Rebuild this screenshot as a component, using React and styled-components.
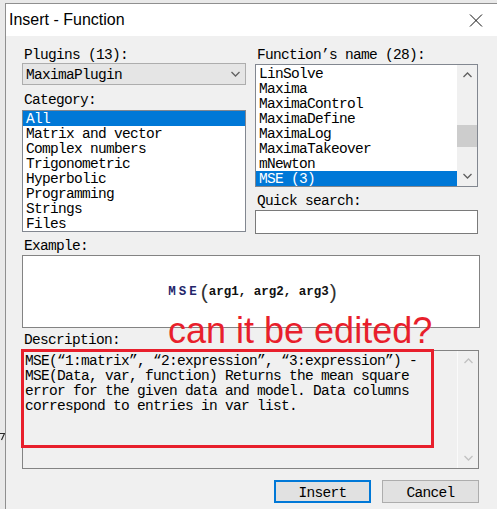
import styled, { createGlobalStyle } from "styled-components";

const mono = `"Liberation Mono", "Noto Sans CJK SC", monospace`;

const GlobalStyle = createGlobalStyle`
  html, body {
    margin: 0;
    padding: 0;
  }
  body {
    background: #e9e9e9;
    overflow: hidden;
  }
`;

const Screen = styled.div`
  width: 497px;
  height: 509px;
  box-sizing: border-box;
  padding: 3px 0 0 5px;
  position: relative;
  overflow: hidden;
`;

// fragment of whatever sits behind the dialog, peeking out on the left
const Stray = styled.svg`
  position: absolute;
  left: 0;
  top: 432px;
`;

const Window = styled.div`
  height: 100%;
  border-left: 1px solid #8f8f8f;
  border-top: 1px solid #8f8f8f;
  background: #f0f0f0;
  display: flex;
  flex-direction: column;
`;

const TitleBar = styled.div`
  height: 32px;
  flex: none;
  background: #fff;
  display: flex;
  align-items: center;
  justify-content: space-between;
  padding: 0 14px 0 3px;
  font-family: "Liberation Sans", Arial, sans-serif;
  font-size: 16px;
  color: #000;
`;

const Body = styled.div`
  flex: 1;
  display: flex;
  flex-direction: column;
  padding: 11px 17px 0 16px;
`;

const TopGrid = styled.div`
  display: grid;
  grid-template-columns: 224px 223px;
  column-gap: 9px;
  align-items: start;
`;

const Field = styled.div`
  display: flex;
  flex-direction: column;
`;

const Label = styled.div`
  font-family: ${mono};
  font-size: 14.5px;
  letter-spacing: -0.7px;
  line-height: 16px;
  color: #000;
  padding-left: 2px;
  margin-top: ${(p) => p.$top || 0}px;
  white-space: pre;
`;

const Combo = styled.div`
  height: 22px;
  box-sizing: border-box;
  border: 1px solid #adadad;
  background: #e5e5e5;
  display: flex;
  justify-content: space-between;
  padding: 3px 5px 0 3px;
  font-family: ${mono};
  font-size: 14.5px;
  letter-spacing: -0.7px;
  line-height: 17px;
  color: #000;

  svg {
    align-self: center;
    margin-top: -3px;
  }
`;

const ListBox = styled.div`
  margin-top: ${(p) => p.$top}px;
  height: ${(p) => p.$h}px;
  box-sizing: border-box;
  border: 1px solid #828790;
  background: #fff;
  display: flex;
  overflow: hidden;
`;

const Items = styled.div`
  flex: 1;
  min-width: 0;
  padding-top: ${(p) => p.$pad || 0}px;
`;

const Item = styled.div`
  height: 15px;
  line-height: 16px;
  padding-left: 3px;
  white-space: pre;
  font-family: ${mono};
  font-size: 14.5px;
  letter-spacing: -0.7px;
  background: ${(p) => (p.$selected ? "#0078d7" : "transparent")};
  color: ${(p) => (p.$selected ? "#fff" : "#000")};
`;

const ScrollBar = styled.div`
  width: 20px;
  flex: none;
  display: flex;
  flex-direction: column;
  background: #f0f0f0;
  border-left: ${(p) => (p.$disabled ? "1px solid #fafafa" : "none")};
`;

const ArrowBtn = styled.div`
  height: 20px;
  flex: none;
  display: flex;
  align-items: center;
  justify-content: center;
`;

const Track = styled.div`
  flex: 1;
`;

const Thumb = styled.div`
  height: 22px;
  background: #cdcdcd;
`;

const SearchInput = styled.input`
  margin-top: 1px;
  height: 24px;
  box-sizing: border-box;
  border: 1px solid #7a7a7a;
  background: #fff;
  outline: none;
  font-family: ${mono};
  font-size: 14.5px;
`;

const ExampleBox = styled.div`
  margin-top: 1px;
  height: 73px;
  box-sizing: border-box;
  border: 1px solid #838383;
  background: #fff;
  display: flex;
  align-items: center;
  justify-content: center;
  padding-left: 4px;
`;

const Formula = styled.div`
  display: flex;
  align-items: center;
  font-family: ${mono};
  font-weight: bold;
  font-size: 12.5px;
  color: #111;
`;

const FnName = styled.span`
  color: #24246a;
  letter-spacing: 3px;
`;

const Paren = styled.span`
  font-family: "Liberation Sans", sans-serif;
  font-weight: normal;
  font-size: 21px;
  line-height: 1;
  color: #333;
  margin: 0 1px;
`;

const DescSection = styled.div`
  position: relative;
  margin-top: 4px;
  display: flex;
  flex-direction: column;
`;

const DescBox = styled.div`
  margin-top: 2px;
  margin-right: 1px;
  height: 119px;
  box-sizing: border-box;
  border: 1px solid #838383;
  background: #f0f0f0;
  display: flex;
`;

const DescText = styled.div`
  flex: 1;
  padding: 3px 0 0 2px;
  font-family: ${mono};
  font-size: 14.5px;
  letter-spacing: -0.7px;
  line-height: 15px;
  white-space: pre;
  color: #000;
`;

const AnnotRect = styled.div`
  position: absolute;
  left: -1px;
  top: 17px;
  width: 413px;
  height: 99px;
  box-sizing: border-box;
  border: 3px solid #e81f2c;
  pointer-events: none;
`;

const AnnotText = styled.div`
  position: absolute;
  left: 146px;
  top: -19px;
  font-family: "Liberation Sans", Arial, sans-serif;
  font-size: 36px;
  line-height: 36px;
  color: #e81f2c;
  white-space: nowrap;
`;

const ButtonRow = styled.div`
  display: flex;
  justify-content: flex-end;
  gap: 11px;
  margin-top: 11px;
  margin-right: 1px;
`;

const Button = styled.button`
  width: 97px;
  height: 23px;
  box-sizing: border-box;
  padding: 2px 0 0;
  background: #e1e1e1;
  border: ${(p) => (p.$primary ? "2px solid #0078d7" : "1px solid #adadad")};
  font-family: ${mono};
  font-size: 14.5px;
  letter-spacing: -0.7px;
  color: #000;
`;

const categories = [
  "All",
  "Matrix and vector",
  "Complex numbers",
  "Trigonometric",
  "Hyperbolic",
  "Programming",
  "Strings",
  "Files",
];

const functions = [
  "LinSolve",
  "Maxima",
  "MaximaControl",
  "MaximaDefine",
  "MaximaLog",
  "MaximaTakeover",
  "mNewton",
  "MSE (3)",
];

const description = [
  "MSE(“1:matrix”, “2:expression”, “3:expression”) -",
  "MSE(Data, var, function) Returns the mean square",
  "error for the given data and model. Data columns",
  "correspond to entries in var list.",
].join("\n");

const Chevron = ({ up, color = "#606060" }) => (
  <svg width="9" height="6" viewBox="0 0 9 6">
    <polyline
      points={up ? "0.5,5 4.5,1 8.5,5" : "0.5,1 4.5,5 8.5,1"}
      fill="none"
      stroke={color}
      strokeWidth="1.3"
    />
  </svg>
);

const Scroller = ({ disabled, thumbAt }) => {
  const color = disabled ? "#c2c2c2" : "#606060";
  return (
    <ScrollBar $disabled={disabled}>
      <ArrowBtn>
        <Chevron up color={color} />
      </ArrowBtn>
      <Track>{!disabled && <Thumb style={{ marginTop: thumbAt }} />}</Track>
      <ArrowBtn>
        <Chevron color={color} />
      </ArrowBtn>
    </ScrollBar>
  );
};

const App = () => {
  return (
    <Screen>
      <GlobalStyle />
      <Stray width="5" height="10" viewBox="0 0 5 10">
        <path d="M0 1.5 H4.5 L1.5 8" fill="none" stroke="#2a2a2a" strokeWidth="1.2" />
      </Stray>
      <Window>
        <TitleBar>
          <span>Insert - Function</span>
          <svg width="14" height="13" viewBox="0 0 14 13">
            <path d="M1 0.5 L13 12.5 M13 0.5 L1 12.5" stroke="#111" strokeWidth="1" fill="none" />
          </svg>
        </TitleBar>
        <Body>
          <TopGrid>
            <Field>
              <Label>Plugins (13):</Label>
              <Combo>
                <span>MaximaPlugin</span>
                <Chevron />
              </Combo>
              <Label $top={7}>Category:</Label>
              <ListBox $top={2} $h={122}>
                <Items>
                  {categories.map((c, i) => (
                    <Item key={c} $selected={i === 0}>
                      {c}
                    </Item>
                  ))}
                </Items>
              </ListBox>
            </Field>
            <Field>
              <Label>Function’s name (28):</Label>
              <ListBox $top={1} $h={123}>
                <Items $pad={1}>
                  {functions.map((f, i) => (
                    <Item key={f} $selected={i === functions.length - 1}>
                      {f}
                    </Item>
                  ))}
                </Items>
                <Scroller thumbAt={40} />
              </ListBox>
              <Label $top={6}>Quick search:</Label>
              <SearchInput type="text" defaultValue="" />
            </Field>
          </TopGrid>

          <Label $top={4}>Example:</Label>
          <ExampleBox>
            <Formula>
              <FnName>MSE</FnName>
              <Paren>(</Paren>
              <span>arg1, arg2, arg3</span>
              <Paren>)</Paren>
            </Formula>
          </ExampleBox>

          <DescSection>
            <Label>Description:</Label>
            <DescBox>
              <DescText>{description}</DescText>
              <Scroller disabled />
            </DescBox>
            <AnnotRect />
            <AnnotText>can it be edited?</AnnotText>
          </DescSection>

          <ButtonRow>
            <Button $primary>Insert</Button>
            <Button>Cancel</Button>
          </ButtonRow>
        </Body>
      </Window>
    </Screen>
  );
};

export default App;
